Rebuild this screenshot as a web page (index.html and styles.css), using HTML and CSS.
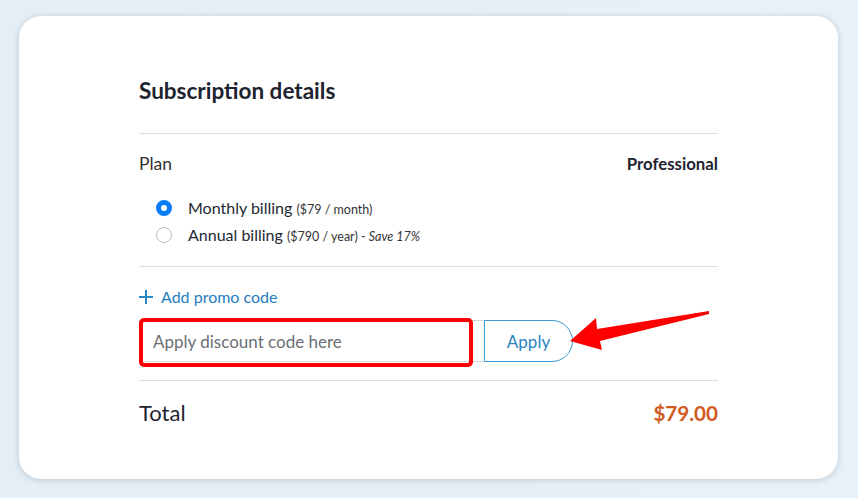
FILE: index.html
```html
<!DOCTYPE html>
<html lang="en">
<head>
    <meta charset="UTF-8">
    <meta name="viewport" content="width=device-width, initial-scale=1.0">
    <title>Subscription details</title>
    <link rel="stylesheet" href="styles.css">
</head>
<body>
    <div class="card">
        <h2 class="title">Subscription details</h2>

        <div class="section plan">
            <div class="plan-row">
                <span class="plan-label">Plan</span>
                <span class="plan-name">Professional</span>
            </div>
            <div class="billing">
                <label class="option">
                    <span class="radio checked"></span>
                    <span>Monthly billing <small>($79 / month)</small></span>
                </label>
                <label class="option">
                    <span class="radio"></span>
                    <span>Annual billing <small>($790 / year) - <em>Save 17%</em></small></span>
                </label>
            </div>
        </div>

        <div class="section promo">
            <a class="promo-link" href="#">
                <svg class="plus" width="14" height="14" viewBox="0 0 14 14">
                    <path d="M7 0v14M0 7h14" stroke="#2a86c4" stroke-width="2"/>
                </svg>
                Add promo code
            </a>
            <div class="promo-row">
                <input class="promo-input" type="text" placeholder="Apply discount code here">
                <button class="apply">Apply</button>
            </div>
        </div>

        <div class="total">
            <span>Total</span>
            <span class="price">$79.00</span>
        </div>
    </div>

    <svg class="marks" width="858" height="498" viewBox="0 0 858 498">
        <rect x="141" y="320" width="330" height="45" rx="3" fill="none" stroke="#ff0000" stroke-width="4"/>
        <polygon points="570,341 596,318 597,329 709,311 709,314 600,341 602,350" fill="#ff0000"/>
    </svg>
</body>
</html>
```

FILE: styles.css
```css
body {
    margin: 0;
    padding: 16px 20px 19px 19px;
    background: linear-gradient(90deg, #e4eef5, #e7f1f8);
    font-family: "Lato", "Open Sans", sans-serif;
    color: #1e2330;
}

.card {
    width: 579px;
    height: 349px;
    padding: 62px 120px 52px;
    background: #ffffff;
    border-radius: 22px;
    box-shadow: 0 1px 6px rgba(40, 60, 80, 0.22);
}

.title {
    margin: 0;
    padding-bottom: 29px;
    font-size: 22.5px;
    line-height: 26px;
    font-weight: 700;
    border-bottom: 1px solid #dddddd;
}

.section {
    border-bottom: 1px solid #dddddd;
}

.plan {
    padding: 19px 0 18px;
}

.plan-row {
    display: flex;
    justify-content: space-between;
    align-items: center;
    line-height: 22px;
}

.plan-label {
    font-size: 17.5px;
    color: #333333;
}

.plan-name {
    font-size: 16.8px;
    font-weight: 700;
    color: #1e2330;
}

.billing {
    margin-top: 19px;
    padding-left: 17px;
    display: flex;
    flex-direction: column;
}

.option {
    display: flex;
    align-items: center;
    gap: 16px;
    height: 27px;
    font-size: 16px;
    color: #222833;
}

.option small {
    font-size: 12.5px;
    color: #333333;
}

.radio {
    width: 14px;
    height: 14px;
    border: 1px solid #b9bfc6;
    border-radius: 50%;
    box-sizing: content-box;
}

.radio.checked {
    width: 6px;
    height: 6px;
    border: 5px solid #0a7cf6;
}

.promo {
    padding: 20px 0 18px;
}

.promo-link {
    display: flex;
    align-items: center;
    gap: 8px;
    font-size: 16px;
    line-height: 20px;
    color: #1f7dc0;
    text-decoration: none;
}

.promo-row {
    display: flex;
    margin-top: 13px;
    height: 42px;
}

.promo-input {
    width: 345px;
    box-sizing: border-box;
    border: 1px solid #d6d6d6;
    border-right: none;
    padding: 0 13px;
    font-family: inherit;
    font-size: 17px;
    color: #333333;
}

.promo-input::placeholder {
    color: #6b6f75;
}

.apply {
    width: 89px;
    background: #ffffff;
    border: 1px solid #3a98d2;
    border-radius: 0 21px 21px 0;
    font-family: inherit;
    font-size: 17px;
    color: #2a84bf;
    cursor: pointer;
}

.total {
    display: flex;
    justify-content: space-between;
    align-items: center;
    padding-top: 18px;
    line-height: 28px;
    font-size: 22px;
}

.price {
    font-weight: 700;
    font-size: 20.6px;
    color: #d05a22;
}

.marks {
    position: absolute;
    left: 0;
    top: 0;
    pointer-events: none;
}
```
